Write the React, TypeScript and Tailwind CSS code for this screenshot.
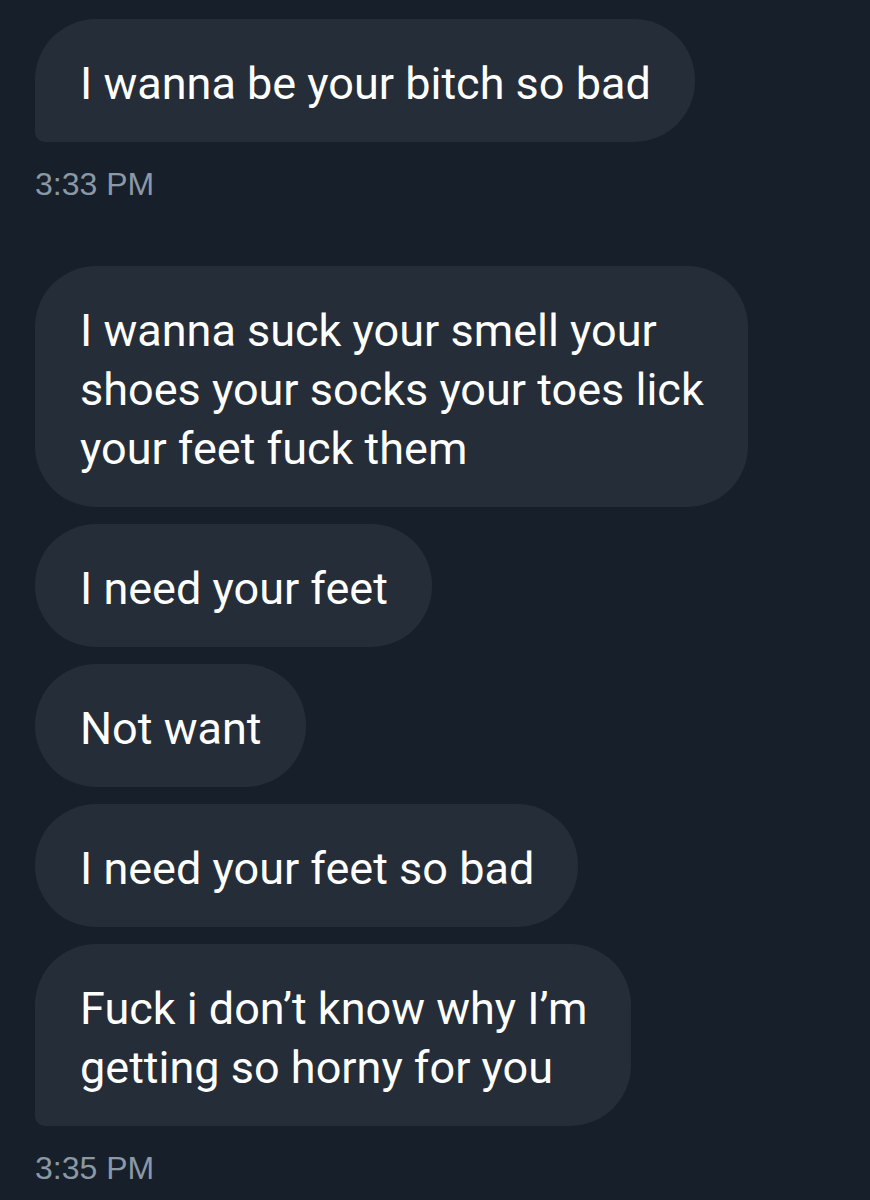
import React from 'react';

// each message is split into its display lines so the bubble hugs the widest one
const groups: { messages: string[][]; time: string }[] = [
  { messages: [['I wanna be your bitch so bad']], time: '3:33 PM' },
  {
    messages: [
      ['I wanna suck your smell your', 'shoes your socks your toes lick', 'your feet fuck them'],
      ['I need your feet'],
      ['Not want'],
      ['I need your feet so bad'],
      ['Fuck i don’t know why I’m', 'getting so horny for you'],
    ],
    time: '3:35 PM',
  },
];

const Bubble: React.FC<{ lines: string[]; last: boolean }> = ({ lines, last }) => (
  <div
    className={`w-fit bg-[#252e38] pl-[45px] pr-[44px] pt-[35px] pb-[29px] rounded-[61px] ${
      last ? 'rounded-bl-[10px]' : ''
    }`}
  >
    {lines.map((l, i) => (
      <p key={i} className="whitespace-nowrap font-['Roboto',sans-serif] text-[45px] leading-[59px] text-white">
        {l}
      </p>
    ))}
  </div>
);

export default function App() {
  return (
    <div className="min-h-[1200px] w-full bg-[#17202a] px-[35px] pt-[19px]">
      <div className="flex flex-col">
        {groups.map((g, gi) => (
          <div key={gi} className={`flex flex-col gap-[17px] ${gi > 0 ? 'mt-[64px]' : ''}`}>
            {g.messages.map((m, i) => (
              <Bubble key={i} lines={m} last={i === g.messages.length - 1} />
            ))}
            <div className="mt-[7px] font-['Liberation_Sans',Arial,sans-serif] text-[32px] leading-[36px] text-[#8b98a5]">
              {g.time}
            </div>
          </div>
        ))}
      </div>
    </div>
  );
}
